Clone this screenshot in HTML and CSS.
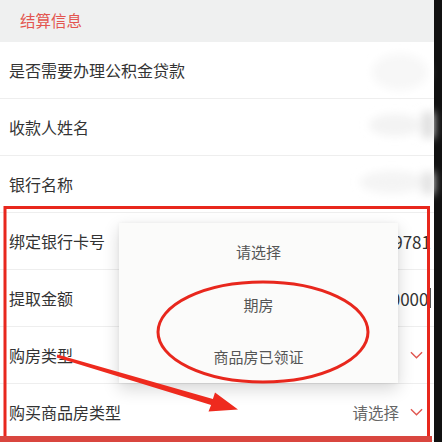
FILE: index.html
```html
<!DOCTYPE html>
<html lang="zh">
<head>
<meta charset="utf-8">
<title>结算信息</title>
<link rel="stylesheet" href="styles.css">
</head>
<body>
<div class="screen">
  <div class="page">
    <div class="section-title">结算信息</div>
    <div class="row"><span class="label">是否需要办理公积金贷款</span></div>
    <div class="row"><span class="label">收款人姓名</span></div>
    <div class="row"><span class="label">银行名称</span></div>
    <div class="row"><span class="label">绑定银行卡号</span><span class="value">39781</span></div>
    <div class="row"><span class="label">提取金额</span><span class="value">0000<i class="caret"></i></span></div>
    <div class="row"><span class="label">购房类型</span><span class="select"><svg class="chev" viewBox="0 0 14 8"><path d="M1 1 L7 7 L13 1"/></svg></span></div>
    <div class="row"><span class="label">购买商品房类型</span><span class="select"><span class="placeholder">请选择</span><svg class="chev" viewBox="0 0 14 8"><path d="M1 1 L7 7 L13 1"/></svg></span></div>
  </div>
  <div class="edge"></div>

  <div class="picker">
    <div class="option">请选择</div>
    <div class="option">期房</div>
    <div class="option">商品房已领证</div>
  </div>

  <svg class="marks" viewBox="0 0 442 442" width="442" height="442">
    <defs>
      <filter id="blur" x="-50%" y="-50%" width="200%" height="200%"><feGaussianBlur stdDeviation="4"/></filter>
    </defs>
    <g filter="url(#blur)">
      <ellipse cx="400" cy="72" rx="28" ry="18" fill="#f7f7f7"/>
      <ellipse cx="395" cy="125" rx="26" ry="11" fill="#f3f3f3"/>
      <rect x="422" y="112" width="12" height="26" fill="#e0e0e0"/>
      <ellipse cx="392" cy="182" rx="32" ry="11" fill="#f4f4f4"/>
      <rect x="422" y="172" width="12" height="22" fill="#e4e4e4"/>
    </g>
    <rect x="5" y="207.5" width="423.5" height="232" fill="none" stroke="#e8271d" stroke-width="3"/>
    <rect x="0" y="436" width="432" height="6" fill="#d9463f"/>
    <ellipse cx="263" cy="332" rx="105" ry="50" fill="none" stroke="#e8271d" stroke-width="3"/>
    <polygon fill="#ee2a1e" points="57.3,354.6 212.9,399.1 215,392.5 238,409.5 208.5,411.5 211.1,404.9 56.7,357.4"/>
  </svg>
</div>
</body>
</html>
```

FILE: styles.css
```css
html, body {
  margin: 0;
  padding: 0;
  background: #ffffff;
}

body {
  font-family: "Noto Sans CJK SC", "Noto Sans", "Liberation Sans", sans-serif;
}

.screen {
  position: relative;
  display: flex;
  width: 442px;
  height: 442px;
  overflow: hidden;
}

.page {
  flex: 1;
  display: flex;
  flex-direction: column;
  background: #ffffff;
  min-width: 0;
}

.edge {
  width: 8px;
  background: #111111;
}

.section-title {
  height: 42px;
  flex: none;
  background: #eff0f0;
  color: #e3554f;
  font-size: 15.5px;
  display: flex;
  align-items: center;
  padding-left: 20px;
  padding-bottom: 2px;
  box-sizing: border-box;
}

.row {
  height: 57px;
  flex: none;
  box-sizing: border-box;
  border-bottom: 1px solid #eeeeee;
  display: flex;
  align-items: center;
  justify-content: space-between;
  padding: 0 3px 0 9px;
  overflow: hidden;
  white-space: nowrap;
}

.label {
  color: #333333;
  font-size: 16px;
}

.value {
  color: #333333;
  font-size: 17px;
  display: flex;
  align-items: center;
}

.caret {
  display: inline-block;
  width: 1.5px;
  height: 20px;
  background: #555555;
  margin-left: 1px;
}

.select {
  display: flex;
  align-items: center;
  gap: 11px;
  padding-right: 8px;
}

.placeholder {
  color: #666666;
  font-size: 15.5px;
}

.chev {
  width: 13px;
  height: 8px;
  fill: none;
  stroke: #e0564f;
  stroke-width: 1.5;
}

.picker {
  position: absolute;
  left: 119px;
  top: 223px;
  width: 279px;
  height: 160px;
  background: #fbfbfa;
  box-shadow: 0 6px 16px rgba(0, 0, 0, 0.16), 0 0 4px rgba(0, 0, 0, 0.05);
  display: flex;
  flex-direction: column;
  justify-content: center;
  padding-top: 2px;
  box-sizing: border-box;
}

.option {
  height: 53px;
  display: flex;
  align-items: center;
  justify-content: center;
  color: #555555;
  font-size: 15px;
}

.marks {
  position: absolute;
  left: 0;
  top: 0;
  pointer-events: none;
}
```
